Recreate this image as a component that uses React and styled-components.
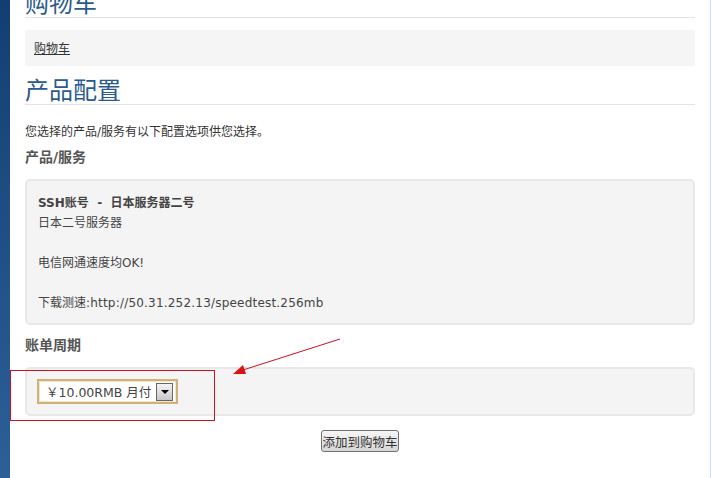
import styled, { createGlobalStyle } from "styled-components";

const GlobalStyle = createGlobalStyle`
  html, body, #root {
    margin: 0;
    height: 100%;
  }
  body {
    overflow: hidden;
    background: #fff;
    font-family: "DejaVu Sans", "Noto Sans CJK SC", sans-serif;
    color: #333;
  }
`;

const Page = styled.div`
  position: relative;
  display: flex;
  flex-direction: row;
  height: 100%;
  width: 711px;
`;

const Sidebar = styled.div`
  width: 10px;
  flex-shrink: 0;
  background: linear-gradient(#123f72, #2c6097);
`;

const Main = styled.div`
  flex: 1;
  padding: 0 15px;
  border-right: 1px solid #cbdcf7;
`;

const Heading = styled.h1`
  margin: ${(p) => (p.$first ? "-13px 0 12px" : "8px 0 0")};
  font-size: 24px;
  line-height: 30px;
  font-weight: normal;
  color: #2b5a8d;
  border-bottom: 1px solid #e3e3e3;
  font-family: "Noto Sans CJK SC", sans-serif;
`;

const Breadcrumb = styled.div`
  background: #f5f5f5;
  padding: 11px 9px 9px;
  font-size: 12px;
  line-height: 16px;
`;

const CrumbLink = styled.a`
  color: #333;
  text-decoration: underline;
`;

const Intro = styled.p`
  margin: 18px 0 0;
  font-size: 12px;
  line-height: 18px;
  color: #333;
`;

const SubHeading = styled.h2`
  margin: ${(p) => p.$top || "6px"} 0 0;
  font-size: 14px;
  line-height: 20px;
  font-weight: bold;
  color: #555;
`;

const Well = styled.div`
  margin-top: 12px;
  background: #f4f4f4;
  border: 2px solid #e8e8e8;
  border-radius: 5px;
  padding: ${(p) => p.$pad || "12px 11px 10px"};
`;

const Line = styled.div`
  font-size: 12px;
  line-height: 20px;
  min-height: 20px;
  color: #444;
  white-space: pre;
  font-weight: ${(p) => (p.$bold ? "bold" : "normal")};
`;

const Latin = styled.span`
  letter-spacing: 0.2px;
`;

const Select = styled.div`
  display: inline-flex;
  align-items: center;
  gap: 5px;
  height: 25px;
  box-sizing: border-box;
  padding: 0 3px 0 7px;
  border: 2px solid #cfb27a;
  box-shadow: inset 0 0 0 1px #f3e6c8;
  background: #fff;
  font-size: 12.5px;
  color: #444;
`;

const DropButton = styled.span`
  display: flex;
  align-items: center;
  justify-content: center;
  width: 15px;
  height: 16px;
  border: 1px solid #666;
  background: linear-gradient(#f4f4f4, #c8c8c8);
  &::after {
    content: "";
    border-left: 4px solid transparent;
    border-right: 4px solid transparent;
    border-top: 4px solid #000;
  }
`;

const Actions = styled.div`
  display: flex;
  justify-content: center;
  margin-top: 14px;
`;

const Button = styled.button`
  width: 78px;
  height: 22px;
  padding: 0;
  font-size: 12.5px;
  font-family: "Noto Sans CJK SC", sans-serif;
  color: #333;
  border: 1px solid #707070;
  border-radius: 3px;
  background: linear-gradient(#f6f6f6, #d6d6d6);
`;

const Annotation = styled.svg`
  position: absolute;
  left: 0;
  top: 0;
  pointer-events: none;
`;

export default function App() {
  return (
    <>
      <GlobalStyle />
      <Page>
        <Sidebar />
        <Main>
          <Heading $first>购物车</Heading>
          <Breadcrumb>
            <CrumbLink href="#">购物车</CrumbLink>
          </Breadcrumb>
          <Heading>产品配置</Heading>
          <Intro>您选择的产品/服务有以下配置选项供您选择。</Intro>
          <SubHeading>产品/服务</SubHeading>
          <Well>
            <Line $bold>{"SSH账号  -  日本服务器二号"}</Line>
            <Line>日本二号服务器</Line>
            <Line />
            <Line>电信网通速度均OK!</Line>
            <Line />
            <Line>
              下载测速<Latin>:http://50.31.252.13/speedtest.256mb</Latin>
            </Line>
          </Well>
          <SubHeading $top="10px">账单周期</SubHeading>
          <Well $pad="10px">
            <Select>
              ￥10.00RMB 月付
              <DropButton />
            </Select>
          </Well>
          <Actions>
            <Button>添加到购物车</Button>
          </Actions>
        </Main>
        <Annotation width="711" height="478">
          <rect x="10.5" y="370.5" width="204" height="50" fill="none" stroke="#cc1122" strokeWidth="1" />
          <line x1="340" y1="339" x2="243" y2="370" stroke="#cc1122" strokeWidth="1" />
          <polygon points="233,374 243,365 246,374" fill="#dd1111" />
        </Annotation>
      </Page>
    </>
  );
}
